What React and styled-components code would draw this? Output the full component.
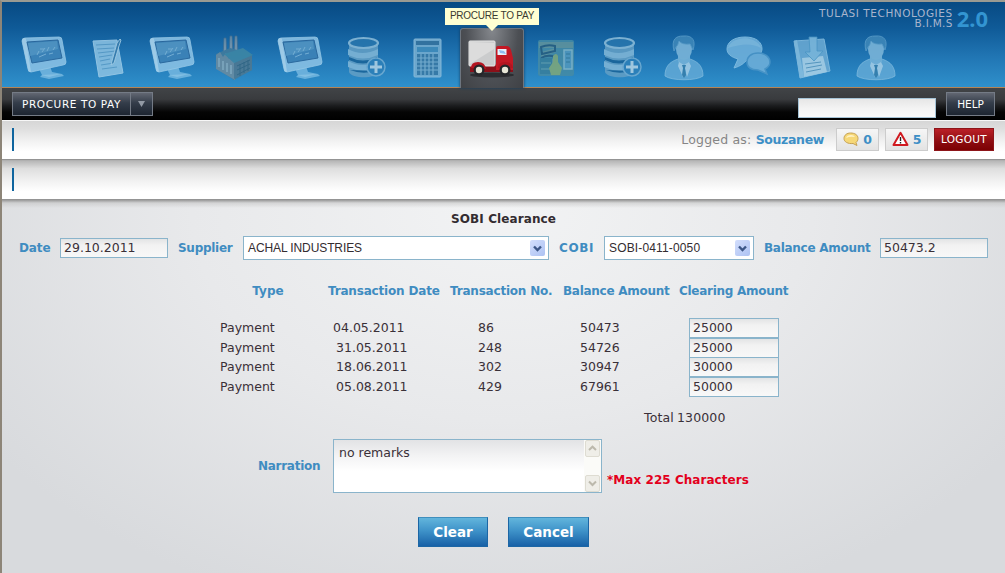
import React from "react";
import styled, { createGlobalStyle, css } from "styled-components";

const Global = createGlobalStyle`
  * { box-sizing: border-box; }
  body { margin: 0; background: #d9dce0; overflow: hidden; }
  button, input { font: inherit; margin: 0; }
`;

const Page = styled.div`
  width: 1005px;
  height: 573px;
  display: flex;
  flex-direction: column;
  border-left: 2px solid #8d8578;
  border-top: 2px solid #9a9a92;
  font-family: "DejaVu Sans", Verdana, sans-serif;
  font-size: 12.5px;
  color: #3a3038;
  white-space: nowrap;
`;

const Header = styled.header`
  height: 86px;
  flex: none;
  display: flex;
  flex-direction: column;
  background: linear-gradient(#074a83, #0f5a97 30%, #2176b4 65%, #2f90cb);
  border-bottom: 1px solid #b58455;
`;

const Brand = styled.div`
  height: 26px;
  display: flex;
  justify-content: flex-end;
  align-items: flex-start;
  gap: 4px;
  padding: 6px 17px 0 0;
`;

const BrandName = styled.div`
  font-size: 10.5px;
  line-height: 10px;
  letter-spacing: 0.55px;
  text-align: right;
  color: #a9b5cd;
`;

const BrandCode = styled.span`
  display: block;
  letter-spacing: 0.3px;
`;

const Version = styled.div`
  font: bold 22px/20px "Noto Sans", sans-serif;
  color: #3395d2;
`;

const Tabs = styled.nav`
  display: flex;
  padding-left: 10px;
  height: 60px;
`;

const Tab = styled.div`
  position: relative;
  width: 64px;
  height: 60px;
  padding: 6px 8px;
  > svg { opacity: ${(p) => (p.$active ? 1 : 0.86)}; }
  ${(p) =>
    p.$active &&
    css`
      border-radius: 3px 3px 0 0;
      border: 1px solid #6d757f;
      border-bottom: 0;
      padding: 5px 7px;
      background: radial-gradient(ellipse at 50% 0, #85888d, #4c4f54 60%, #3f4145);
      box-shadow: 0 0 3px #123c60;
    `}
`;

const Tip = styled.div`
  position: absolute;
  left: -16px;
  top: -21px;
  width: 94px;
  height: 17px;
  background: #ffffd2;
  color: #3a3a30;
  font: 10px/15px "Liberation Sans", sans-serif;
  letter-spacing: -0.25px;
  text-align: center;
  &::after {
    content: "";
    position: absolute;
    left: 41px;
    top: 17px;
    border: 6px solid transparent;
    border-top-color: #ffffd2;
    border-bottom: 0;
  }
`;

const NavBar = styled.div`
  height: 32px;
  flex: none;
  display: flex;
  padding: 4px 10px 0 10px;
  background: linear-gradient(#414447, #393b3e 35%, #1c1d1f 55%, #050505 75%, #000);
`;

const DarkButton = styled.button`
  height: 24px;
  padding: 0;
  display: flex;
  align-items: center;
  justify-content: center;
  width: ${(p) => p.$w}px;
  border: 1px solid #747b86;
  background: linear-gradient(#626772, #343d4a 45%, #1d2531);
  color: #fff;
  font-size: 10.5px;
  letter-spacing: ${(p) => p.$ls || 0}px;
`;

const Arrow = styled(DarkButton)`
  border-left: 0;
`;

const Search = styled.input`
  width: 138px;
  height: 20px;
  margin: 6px 10px 0 auto;
  border: 1px solid #a5c3d6;
  background: linear-gradient(#e6e6e6, #f3f3f3 50%, #fafafa);
`;

const Strip = styled.div`
  height: 40px;
  flex: none;
  display: flex;
  align-items: center;
  padding: 0 11px 2px 10px;
  border-top: 1px solid ${(p) => (p.$first ? "#f7f7f7" : "#b0b0b0")};
  border-bottom: 1px solid #949494;
  background: linear-gradient(${(p) => (p.$first ? "#d6d6d6" : "#b7b7b7")}, #dedede 20%, #f0f0f0 50%, #fff 80%);
`;

const Marker = styled.div`
  width: 2px;
  height: 23px;
  margin-right: auto;
  background: #0f659f;
`;

const Logged = styled.div`
  color: #858585;
  margin-right: 12px;
  letter-spacing: 0.2px;
  b { color: #3d8fc6; letter-spacing: -0.35px; }
`;

const Chip = styled.div`
  width: 43px;
  height: 23px;
  margin-right: 6px;
  display: flex;
  align-items: center;
  justify-content: center;
  gap: 4px;
  border: 1px solid #ccc;
  background: linear-gradient(#f6f6f6, #e3e3e3);
  color: #3d8fc6;
  font-weight: bold;
`;

const Logout = styled.button`
  width: 60px;
  height: 23px;
  padding: 0;
  border: 1px solid #8d1519;
  background: linear-gradient(#bb2027, #8c0c10 60%, #7c0003);
  color: #fff;
  font-size: 10.5px;
  letter-spacing: 0.3px;
`;

const Content = styled.main`
  flex: 1;
  display: flex;
  flex-direction: column;
  background: linear-gradient(#999 0, rgba(190, 190, 190, 0.5) 3px, transparent 8px),
    radial-gradient(ellipse 620px 420px at 500px 10px, #f2f3f4, #e8e9eb 50%, #d8dadd);
`;

const Title = styled.h1`
  margin: 10px 0 0;
  height: 16px;
  font-size: 12px;
  line-height: 18px;
  letter-spacing: 0.1px;
  text-align: center;
  color: #332c30;
`;

const Fields = styled.div`
  display: flex;
  align-items: center;
  gap: 10px;
  margin-top: 10px;
  padding-left: 17px;
  height: 24px;
`;

const Label = styled.div`
  flex: none;
  width: ${(p) => (p.$w ? p.$w + "px" : "auto")};
  font-size: 12px;
  font-weight: bold;
  color: #3f8cc1;
  letter-spacing: ${(p) => p.$ls ?? -0.28}px;
  text-align: ${(p) => p.$align || "left"};
`;

const Field = styled.input`
  width: ${(p) => p.$w}px;
  height: 20px;
  padding: 0 3px 1px;
  border: 1px solid #8ab4cb;
  outline: 0;
  background: linear-gradient(#e3e4e5, #f2f2f2 35%, #f8f8f8);
  color: #3a3038;
`;

const Select = styled.div`
  flex: none;
  width: ${(p) => p.$w}px;
  height: 24px;
  display: flex;
  align-items: center;
  justify-content: space-between;
  padding: 0 3px 0 4px;
  border: 1px solid #8ab4cb;
  background: #fff;
  color: #332c30;
  font: 12px "Liberation Sans", sans-serif;
  letter-spacing: ${(p) => p.$ls || 0}px;
`;

const Drop = styled.span`
  width: 15px;
  height: 16px;
  display: grid;
  place-items: center;
  border-radius: 2px;
  background: linear-gradient(135deg, #d3defc, #adc2f3);
`;

const Columns = styled.div`
  display: grid;
  grid-template-columns: 100px 112px 103px 106px 109px;
  column-gap: 10px;
  margin-left: 216px;
  align-items: center;
  height: ${(p) => p.$h}px;
  margin-top: ${(p) => p.$top || 0}px;
`;

const Rows = styled.div`
  margin-top: 17px;
`;

const Cell = styled.div`
  padding-left: ${(p) => p.$x}px;
  padding-bottom: ${(p) => (p.$text ? 1 : 0)}px;
`;

const Total = styled.div`
  display: flex;
  gap: 3px;
  margin: 12px 0 0 642px;
  height: 17px;
  align-items: center;
  letter-spacing: 0.15px;
`;

const Narration = styled.div`
  display: flex;
  margin: 13px 0 0 256px;
  height: 54px;
  align-items: center;
`;

const Area = styled.div`
  width: 269px;
  height: 54px;
  margin: 0 5px 0 12px;
  display: flex;
  justify-content: space-between;
  border: 1px solid #8ab4cb;
  background: linear-gradient(#e2e3e5, #f3f3f4 30%, #fff 60%);
`;

const Remarks = styled.div`
  padding: 5px;
`;

const Scroll = styled.div`
  width: 17px;
  display: flex;
  flex-direction: column;
  justify-content: space-between;
  background: #fbfbf8;
`;

const ScrollButton = styled.span`
  height: 17px;
  margin: 0 1px;
  display: grid;
  place-items: center;
  border: 1px solid #dedcd2;
  border-radius: 2px;
  background: #efeee8;
`;

const Hint = styled.div`
  margin-top: 28px;
  font-size: 12px;
  font-weight: bold;
  letter-spacing: 0.05px;
  color: #e3001c;
`;

const Actions = styled.div`
  display: flex;
  gap: 20px;
  margin: 24px 0 0 416px;
`;

const Action = styled.button`
  width: ${(p) => p.$w}px;
  height: 30px;
  padding: 0;
  border: 1px solid #1c66a5;
  border-top-color: #3f8fbd;
  background: linear-gradient(#62b5dc, #3f93c9 45%, #1861a7);
  color: #fff;
  font-size: 13.5px;
  font-weight: bold;
`;

const Chevron = ({ up, color = "#3c5687", w = 2.4 }) => (
  <svg width="9" height="7" viewBox="0 0 9 7">
    <path d={up ? "M1 5 4.5 1.7 8 5" : "M1 1.5 4.5 5 8 1.5"} fill="none" stroke={color} strokeWidth={w} />
  </svg>
);

const Icon = ({ children }) => (
  <svg width="48" height="48" viewBox="0 0 48 48">{children}</svg>
);

const Monitor = () => (
  <Icon>
    <path d="M20 37 21 32 30 32 32 38 42 40 44 42 29 45 20 43 22 41Z" fill="#74b7e0" />
    <path d="M21 41 41 40 29 43Z" fill="#91c9e9" />
    <path d="M2 7Q2 4 5 4L39 3Q42 3 42 6L46 28Q46 31 43 31L11 38Q8 38 8 35Z" fill="#8dc4e7" stroke="#a6d3ee" strokeWidth=".8" />
    <path d="M2 7Q2 4 5 4L6 5 11 38Q8 38 8 35Z" fill="#b2d9f0" />
    <path d="M7 8 38 6 42 24 12 29Z" fill="#3f84b8" stroke="#2d679b" />
    <path d="M8 9 37 7 38 15 10 22Z" fill="#609fc9" opacity=".7" />
    <path d="m17 21 2-4m3 1 3-4m2 3 2-4m4 3 2-3M19 23l7-3m-6-5 4 0m5 5 4-1" fill="none" stroke="#88bcdc" strokeWidth=".9" />
  </Icon>
);

const Note = () => (
  <Icon>
    <path d="m9 7 24-1 6 33-24 4z" fill="#8cc2e3" stroke="#a4d0ea" />
    <path d="m12 11 19-1M13 15l17-1M14 19l18-2M15 23l13-2M16 27l10-2M17 31l13-2M18 35l15-2" stroke="#5e9fc9" strokeWidth="1.1" />
    <path d="m28 27 5-18 3-4 1 1-2 6-5 17-3 2z" fill="#397eae" stroke="#b2d7eb" strokeWidth=".9" />
  </Icon>
);

const Factory = () => (
  <Icon>
    <path d="m11 22 1-18h2l1 18Zm6-2 1-18h2l1 18Zm5-1 1-17h2l1 18Z" fill="#7d98ac" stroke="#426f91" strokeWidth=".8" />
    <path d="m4 20 14-6 18 5 4 6v11L22 46 4 34Z" fill="#427b9c" />
    <path d="m4 21 4-3 3 5 3-4 3 6 3-4 3 5v20L4 35Z" fill="#6b8ca0" />
    <path d="m22 29 18-8v15L22 45Z" fill="#4f7890" />
    <path d="M12 20 31 14 41 21 22 29Z" fill="#3e87a4" />
    <path d="M7 24v9m4-6v9m4-7v9m4-7v9" stroke="#8eb0c1" strokeWidth="1.5" />
    <path d="m25 32 13-6M25 36l13-6M25 41l13-7M28 30v12m4-14v11m4-13v11" stroke="#35647f" strokeWidth="1" />
  </Icon>
);

const Database = () => (
  <Icon>
    <path d="M9 9v29c2 7 28 7 29 0V9" fill="#639fc5" />
    <ellipse cx="23.500" cy="9" rx="14.500" ry="5" fill="#2876ad" stroke="#8dbdd9" strokeWidth="2.200" />
    <path d="M8 15q14 8 30 0v6q-15 7-30 0Zm0 12q14 8 30 0v6q-15 7-30 0Z" fill="#83b8d8" />
    <path d="M9 23q14 7 28 0v3q-14 7-28 0Zm1 13q13 5 24 1" fill="#196398" />
    <circle cx="36" cy="33" r="9" fill="#2d80b9" stroke="#73add2" strokeWidth="1.500" />
    <path d="M36 27v12m-6-6h12" stroke="#b3d3e5" strokeWidth="3" />
  </Icon>
);

const Calculator = () => (
  <Icon>
    <rect x="10" y="5" width="27" height="38" rx="1" fill="#78afd1" stroke="#93c1dd" />
    <rect x="12" y="7" width="23" height="4" fill="#37749f" />
    <rect x="13" y="13" width="21" height="5" fill="#428ebc" />
    <rect x="13" y="20" width="21" height="21" fill="#3979a4" />
    <path d="M13 24h21m-21 4h21m-21 4h21m-21 4h21M17 20v21m4-21v21m4-21v21m4-21v21" stroke="#80b3d1" strokeWidth="1.2" />
  </Icon>
);

const Truck = () => (
  <Icon>
    <ellipse cx="24" cy="41" rx="22" ry="2.5" fill="#2b2c30" />
    <path d="M2 30h42l1 4v4H2Z" fill="#8b1019" />
    <rect x="1" y="7" width="26" height="25" rx="1" fill="#cbcccd" stroke="#e6e6e6" />
    <path d="m2 8 24 1v6L2 30Z" fill="#dcdcdc" />
    <path d="M28 14q0-2 2-2h9q3 0 4 4l2 8v12H28Z" fill="#c31824" />
    <path d="M29.500 15h9v6h-9Z" fill="#e7f3fc" />
    <path d="m31 16 5 1 2 3-6-1" fill="#8fbcf0" />
    <path d="M3 34q0-6 7-6t8 7m12-1q0-6 7-6t8 6" fill="#b31420" />
    <circle cx="11" cy="36" r="5.500" fill="#24262a" /><circle cx="11" cy="36" r="3.200" fill="#e8e7d8" />
    <circle cx="37" cy="36" r="5.500" fill="#24262a" /><circle cx="37" cy="36" r="3.200" fill="#e8e7d8" />
  </Icon>
);

const Ledger = () => (
  <Icon>
    <rect x="6" y="6" width="36" height="36" rx="2" fill="#458ba5" />
    <path d="M7 8h34v6H7zm2 10 15-4v4L9 23zm2 7h15v4H11z" fill="#62959d" />
    <path d="M9 13q7-3 14-1v5L10 20Zm0 11q7-4 14-1" fill="none" stroke="#275e7f" strokeWidth="2" />
    <path d="M8 24h12v16H8Z" fill="#397f9b" />
    <path d="M9 29h10M9 35h9" stroke="#5b99a9" strokeWidth="1.5" />
    <rect x="32" y="16" width="8" height="19" fill="#5298bd" stroke="#85b8c9" strokeWidth="1.500" />
    <path d="M34 20h4m-4 4h4m-4 4h4" stroke="#357896" />
    <path d="M21 22q3-4 5 0v6l4 6-2 7h-9l-2-7 4-6Z" fill="#80a979" />
  </Icon>
);

const User = () => (
  <Icon>
    <path d="M5 42c0-9 4-14 13-17l6 6 6-6c9 3 13 8 13 17-7 5-31 5-38 0Z" fill="#62a9d6" stroke="#8ac1e2" strokeWidth=".8" />
    <path d="M18 22h12v6l-6 4-6-4Z" fill="#79b5da" />
    <ellipse cx="24" cy="15" rx="8" ry="11" fill="#7eb7da" />
    <path d="M14 17C11 5 16 2 23 2c10-1 13 5 10 14l-3-6q-8 1-11-3-1 5-3 6Z" fill="#3f88b9" stroke="#64a4ce" strokeWidth=".8" />
    <path d="m19 28 5 3-1 12-5-11Zm10 0-5 3 3 12 4-11Z" fill="#a9d0e8" />
    <path d="m22 31 4 0-1 3 1 7-2 3-2-3 1-7Z" fill="#377fac" />
  </Icon>
);

const Chat = () => (
  <Icon>
    <path d="M21 3c11 0 17 5 17 12 0 6-7 10-15 11-3 3-6 6-13 8l4-9C7 23 3 20 3 15 3 8 10 3 21 3Z" fill="#72b3dd" stroke="#8ac3e5" />
    <path d="M4 14C7 5 20 2 29 6q7 3 8 8-12-7-33 0Z" fill="#91c6e6" opacity=".6" />
    <path d="M34 19c7 0 12 4 12 9 0 4-3 6-5 7l2 5-9-4c-7 0-11-3-11-8s4-9 11-9Z" fill="#70b1db" stroke="#4c96c8" strokeWidth="1.500" />
  </Icon>
);

const Clipboard = () => (
  <Icon>
    <path d="m6 7 30-2 6 32-30 7Z" fill="#6cabd4" stroke="#8ac1e2" />
    <path d="m6 7 3-1 7 37-4 1Z" fill="#8bc1e1" />
    <path d="m14 24 21-2 4 16-23 5Z" fill="#add3e8" />
    <path d="M21 3h8v14h6l-9 10-9-9h5Z" fill="#83bddf" stroke="#519ac7" strokeWidth=".8" />
    <path d="m17 30 16-2M18 34l16-3M18 38l15-3" stroke="#5c99bf" />
  </Icon>
);

const Bubble = () => (
  <svg width="16" height="15" viewBox="0 0 16 15">
    <path d="M7.500 1C12 1 15 3 15 6.500c0 2-1 3-2 4l1 3-4-2C5 12 1 10 1 6.500 1 3 4 1 7.500 1Z" fill="#f6d878" stroke="#c6a255" />
    <path d="M3 6q1-3 5-3 3 0 4 2-5-1-9 1Z" fill="#fff2c4" />
  </svg>
);

const Alert = () => (
  <svg width="17" height="16" viewBox="0 0 17 16">
    <path d="M8.500 1.800 15.500 14H1.500Z" fill="#fff" stroke="#d01a20" strokeWidth="2" strokeLinejoin="round" />
    <path d="M8.500 6v4m0 1v1.500" stroke="#222" strokeWidth="1.400" />
  </svg>
);

const icons = [Monitor, Note, Monitor, Factory, Monitor, Database, Calculator, Truck, Ledger, Database, User, Chat, Clipboard, User];

const rows = [
  ["04.05.2011", "86", "50473", "25000"],
  ["31.05.2011", "248", "54726", "25000"],
  ["18.06.2011", "302", "30947", "30000"],
  ["05.08.2011", "429", "67961", "50000"],
];

export default function App() {
  return (
    <Page>
      <Global />
      <Header>
        <Brand>
          <BrandName>TULASI TECHNOLOGIES<BrandCode>B.I.M.S</BrandCode></BrandName>
          <Version>2.0</Version>
        </Brand>
        <Tabs>
          {icons.map((Glyph, i) => (
            <Tab key={i} $active={Glyph === Truck}>
              <Glyph />
              {Glyph === Truck && <Tip>PROCURE TO PAY</Tip>}
            </Tab>
          ))}
        </Tabs>
      </Header>
      <NavBar>
        <DarkButton $w={119} $ls={0.6}>PROCURE TO PAY</DarkButton>
        <Arrow $w={22}>
          <svg width="7" height="6"><path d="M0 0h7L3.500 6Z" fill="#929aa5" /></svg>
        </Arrow>
        <Search />
        <DarkButton $w={49}>HELP</DarkButton>
      </NavBar>
      <Strip $first>
        <Marker />
        <Logged>Logged as: <b>Souzanew</b></Logged>
        <Chip><Bubble />0</Chip>
        <Chip><Alert />5</Chip>
        <Logout>LOGOUT</Logout>
      </Strip>
      <Strip><Marker /></Strip>
      <Content>
        <Title>SOBI Clearance</Title>
        <Fields>
          <Label $w={31} $ls={-0.1}>Date</Label>
          <Field $w={108} defaultValue="29.10.2011" />
          <Label $w={55}>Supplier</Label>
          <Select $w={306} $ls={-0.1}>ACHAL INDUSTRIES<Drop><Chevron /></Drop></Select>
          <Label $w={35} $ls={0.6}>COBI</Label>
          <Select $w={150} $ls={0.15}>SOBI-0411-0050<Drop><Chevron /></Drop></Select>
          <Label $w={106}>Balance Amount</Label>
          <Field $w={108} defaultValue="50473.2" />
        </Fields>
        <Columns $h={20} $top={21}>
          <Label $align="center" $ls={0}>Type</Label>
          <Label $ls={-0.18}>Transaction Date</Label>
          <Label $ls={-0.2}>Transaction No.</Label>
          <Label>Balance Amount</Label>
          <Label>Clearing Amount</Label>
        </Columns>
        <Rows>
          {rows.map(([date, no, balance, clearing], i) => (
            <Columns key={no} $h={19.7}>
              <Cell $text $x={2}>Payment</Cell>
              <Cell $text $x={i ? 8 : 5}>{date}</Cell>
              <Cell $text $x={28}>{no}</Cell>
              <Cell $text $x={17}>{balance}</Cell>
              <Cell $x={10}><Field $w={90} defaultValue={clearing} /></Cell>
            </Columns>
          ))}
        </Rows>
        <Total><span>Total</span><span>130000</span></Total>
        <Narration>
          <Label $w={63}>Narration</Label>
          <Area>
            <Remarks>no remarks</Remarks>
            <Scroll>
              <ScrollButton><Chevron up color="#bcb9ac" w={2} /></ScrollButton>
              <ScrollButton><Chevron color="#bcb9ac" w={2} /></ScrollButton>
            </Scroll>
          </Area>
          <Hint>*Max 225 Characters</Hint>
        </Narration>
        <Actions>
          <Action $w={70}>Clear</Action>
          <Action $w={81}>Cancel</Action>
        </Actions>
      </Content>
    </Page>
  );
}
